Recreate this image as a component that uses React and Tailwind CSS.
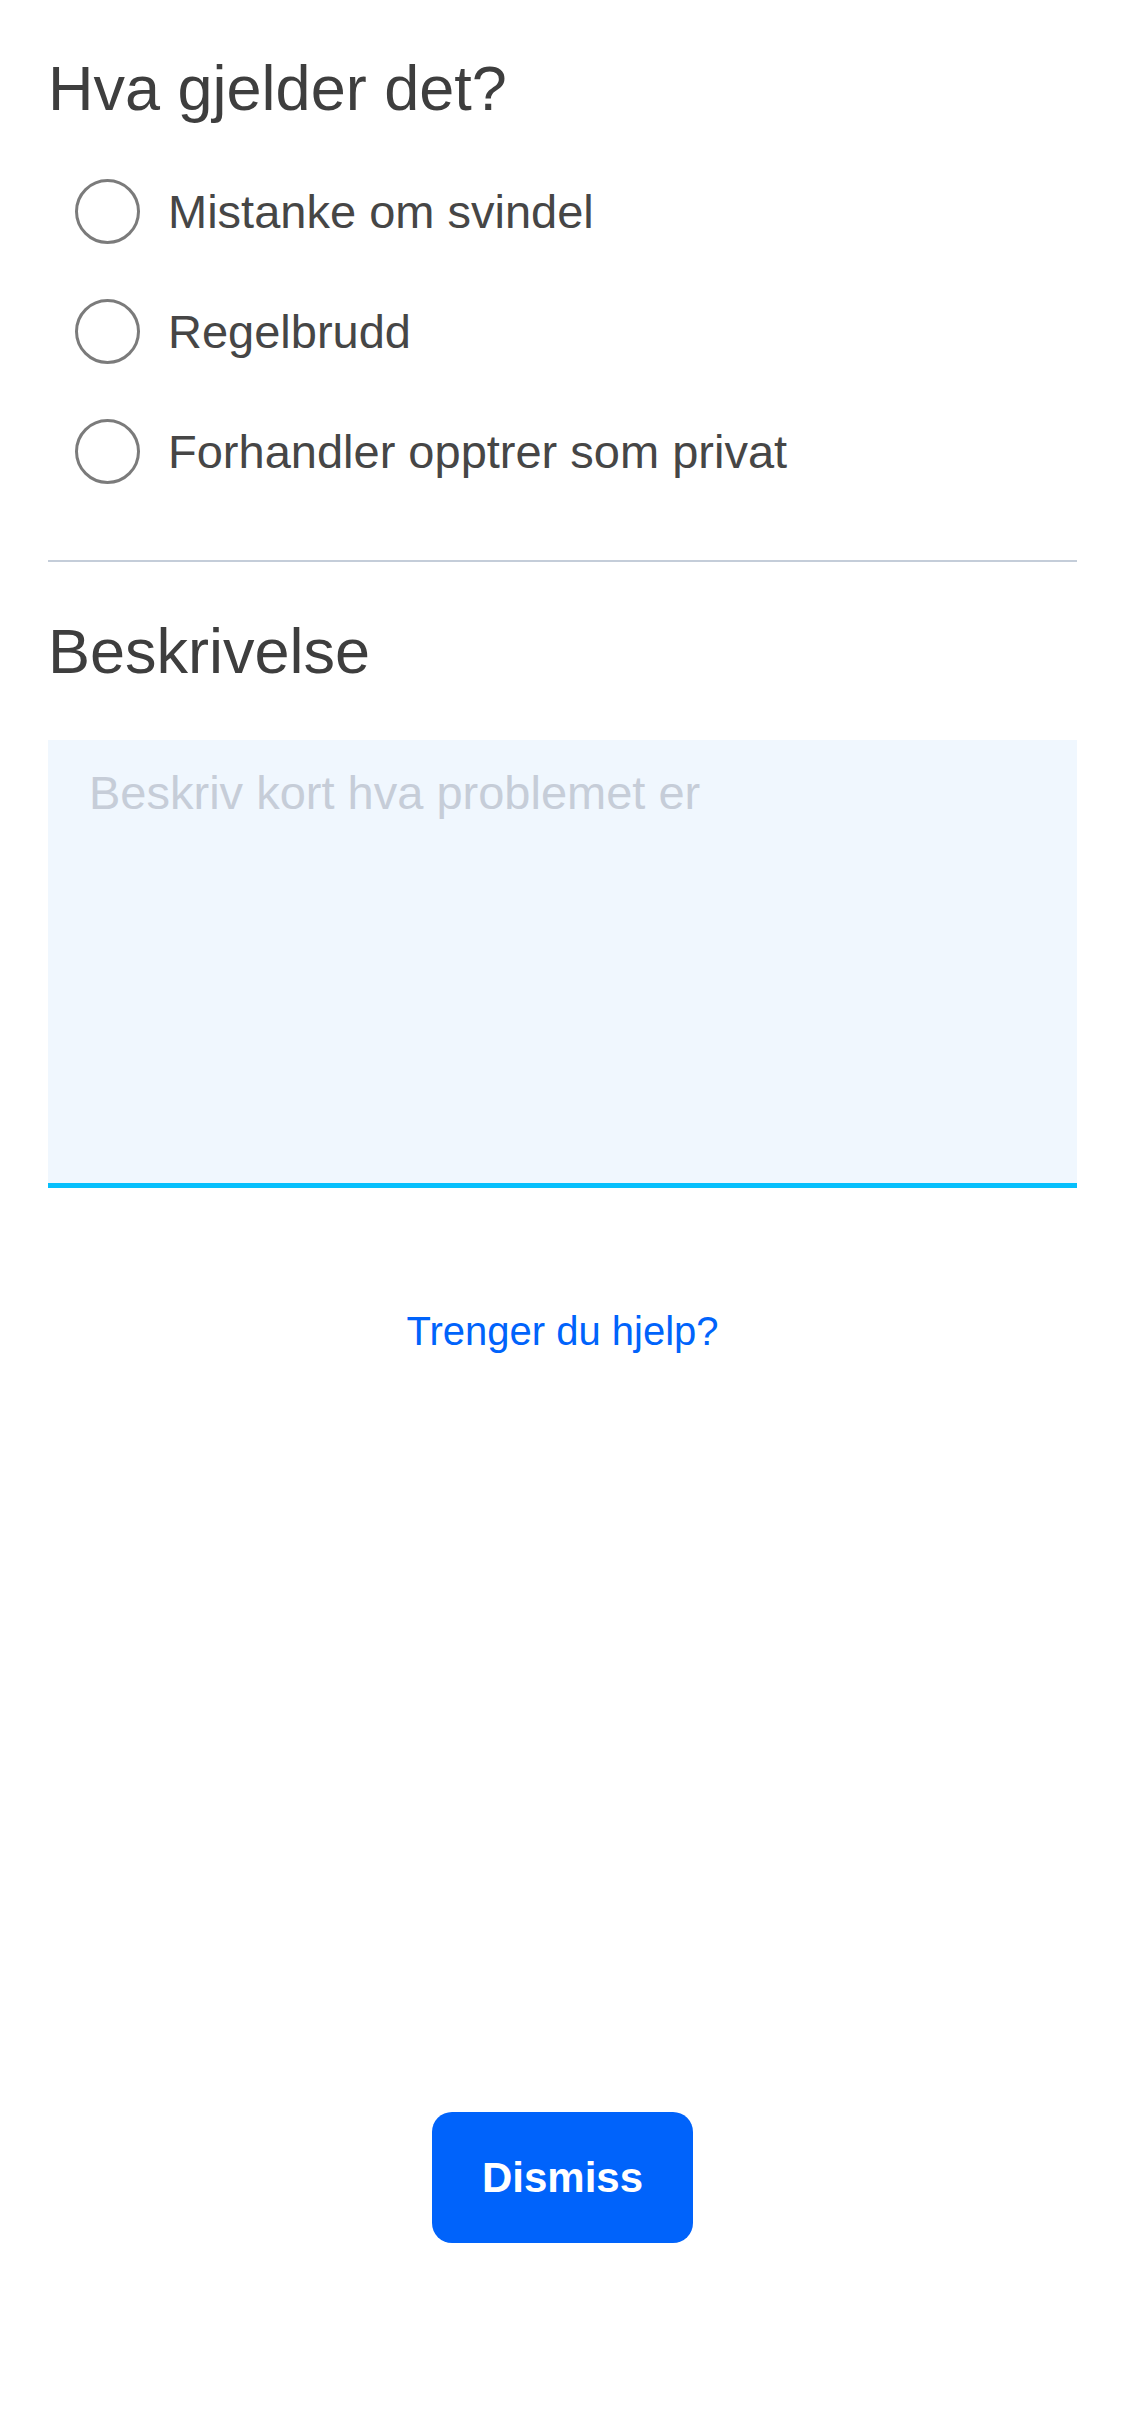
import { useState } from 'react';

const options = [
  { id: 'svindel', label: 'Mistanke om svindel' },
  { id: 'regelbrudd', label: 'Regelbrudd' },
  { id: 'forhandler', label: 'Forhandler opptrer som privat' },
];

function RadioRow({ option, checked, onSelect }) {
  return (
    <label
      className="flex h-[120px] cursor-pointer items-center"
      onClick={() => onSelect(option.id)}
    >
      <span className="ml-[27px] flex h-[65px] w-[65px] shrink-0 items-center justify-center rounded-full border-[3px] border-[#7b7b7b]">
        {checked && <span className="h-[33px] w-[33px] rounded-full bg-[#0063fb]" />}
      </span>
      <span className="ml-[28px] text-[47px] leading-none text-[#464646]">{option.label}</span>
    </label>
  );
}

export default function App() {
  const [selected, setSelected] = useState(null);
  const [text, setText] = useState('');

  return (
    <div className="min-h-[2436px] w-full bg-white px-[48px] font-['Liberation_Sans',Arial,sans-serif]">
      <h1 className="pt-[57px] text-[63px] font-normal leading-none text-[#3e3e3e]">Hva gjelder det?</h1>

      <div className="mt-[31px] flex flex-col">
        {options.map((option) => (
          <RadioRow
            key={option.id}
            option={option}
            checked={selected === option.id}
            onSelect={setSelected}
          />
        ))}
      </div>

      <div className="mt-[49px] h-[2px] bg-[#c4cdd9]" />

      <h2 className="mt-[58px] text-[63px] font-normal leading-none text-[#3e3e3e]">Beskrivelse</h2>

      <textarea
        value={text}
        onChange={(e) => setText(e.target.value)}
        placeholder="Beskriv kort hva problemet er"
        className="mt-[57px] block h-[448px] w-full resize-none border-b-[5px] border-[#06bffc] bg-[#f0f7fe] px-[41px] pt-[29px] text-[47px] leading-[47px] text-[#464646] outline-none placeholder:text-[#c6cdd8]"
      />

      <div className="mt-[123px] flex justify-center">
        <a href="#" className="text-[40px] leading-none text-[#0063fb]">
          Trenger du hjelp?
        </a>
      </div>

      <div className="mt-[761px] flex justify-center">
        <button className="flex h-[131px] w-[261px] items-center justify-center rounded-[20px] bg-[#0063fb] text-[42px] font-bold text-white">
          Dismiss
        </button>
      </div>
    </div>
  );
}
